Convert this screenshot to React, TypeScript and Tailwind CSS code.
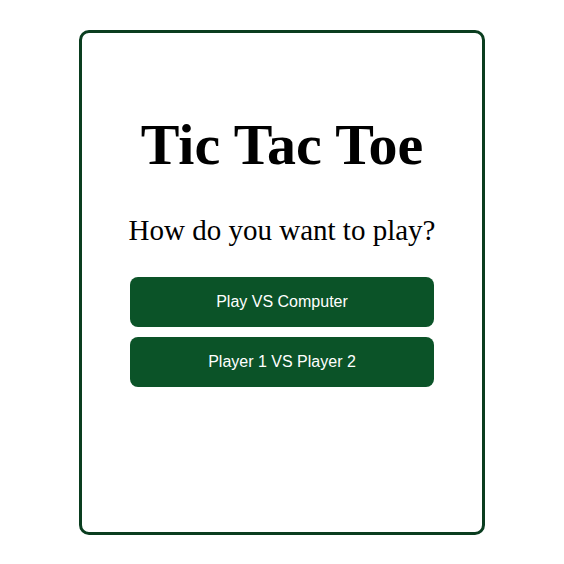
export default function App() {
  return (
    <div className="flex h-[564px] w-[564px] items-start justify-center bg-white pt-[30px]">
      <div className="flex h-[505px] w-[406px] flex-col items-center rounded-[10px] border-[3px] border-[#0a3d1f] pt-[83px]">
        <h1 className="font-['Liberation_Serif',serif] text-[58px] font-bold leading-none text-black">
          Tic Tac Toe
        </h1>
        <p className="mt-[42px] font-['Liberation_Serif',serif] text-[29px] leading-none text-black">
          How do you want to play?
        </p>
        <div className="mt-[32px] flex w-[304px] flex-col gap-[10px]">
          <button className="h-[50px] w-full rounded-[8px] bg-[#0b5328] font-['Liberation_Sans',Arial,sans-serif] text-[16px] text-white">
            Play VS Computer
          </button>
          <button className="h-[50px] w-full rounded-[8px] bg-[#0b5328] font-['Liberation_Sans',Arial,sans-serif] text-[16px] text-white">
            Player 1 VS Player 2
          </button>
        </div>
      </div>
    </div>
  );
}
